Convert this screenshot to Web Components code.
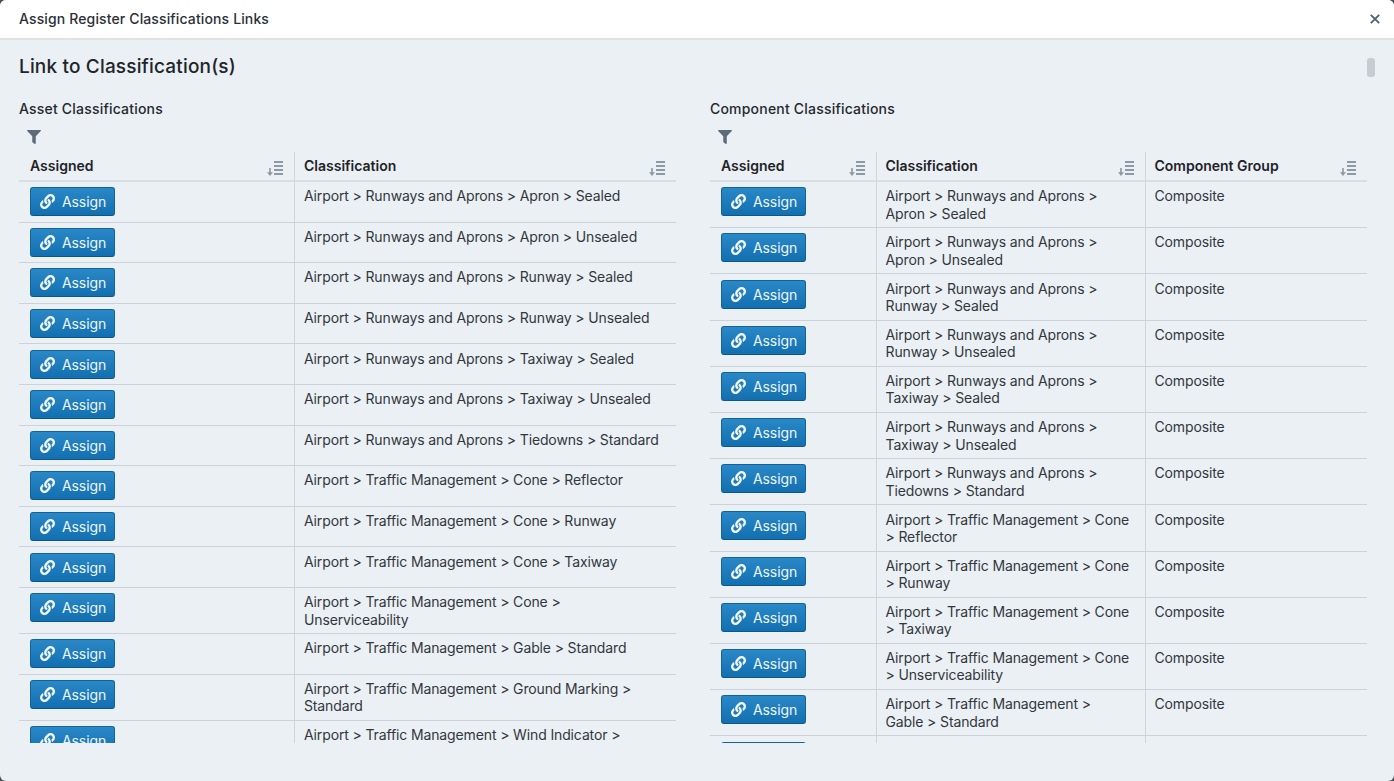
<!DOCTYPE html>
<html>
<head>
<meta charset="utf-8">
<title>Assign Register Classifications Links</title>
<style>
  html, body { margin: 0; height: 100%; background: #4a4f55; overflow: hidden; }
  body { font-family: Inter, "Noto Sans", "Liberation Sans", sans-serif; color: #212529; }
</style>
</head>
<body>
<assign-modal heading="Assign Register Classifications Links">
  <link-panel heading="Link to Classification(s)">
    <class-table heading="Asset Classifications" id="asset"></class-table>
    <class-table heading="Component Classifications" id="component"></class-table>
  </link-panel>
</assign-modal>

<script>
const LINK_PATH = 'M326.612 185.391c59.747 59.809 58.927 155.698.36 214.59-.11.12-.24.25-.36.37l-67.2 67.2c-59.27 59.27-155.699 59.262-214.96 0-59.27-59.26-59.27-155.7 0-214.96l37.106-37.106c9.84-9.84 26.786-3.3 27.294 10.606.648 17.722 3.826 35.527 9.69 52.721 1.986 5.822.567 12.262-3.783 16.612l-13.087 13.087c-28.026 28.026-28.905 73.66-1.155 101.96 28.024 28.579 74.086 28.749 102.325.51l67.2-67.19c28.191-28.191 28.073-73.757 0-101.83-3.701-3.694-7.429-6.564-10.341-8.569a16.037 16.037 0 0 1-6.947-12.606c-.396-10.567 3.348-21.456 11.698-29.806l21.054-21.055c5.521-5.521 14.182-6.199 20.584-1.731a152.482 152.482 0 0 1 20.522 17.197zM467.547 44.449c-59.261-59.262-155.69-59.27-214.96 0l-67.2 67.2c-.12.12-.25.25-.36.37-58.566 58.892-59.387 154.781.36 214.59a152.454 152.454 0 0 0 20.521 17.196c6.402 4.468 15.064 3.789 20.584-1.731l21.054-21.055c8.35-8.35 12.094-19.239 11.698-29.806a16.037 16.037 0 0 0-6.947-12.606c-2.912-2.005-6.64-4.875-10.341-8.569-28.073-28.073-28.191-73.639 0-101.83l67.2-67.19c28.239-28.239 74.3-28.069 102.325.51 27.75 28.3 26.872 73.934-1.155 101.96l-13.087 13.087c-4.35 4.35-5.769 10.79-3.783 16.612 5.864 17.194 9.042 34.999 9.69 52.721.509 13.906 17.454 20.446 27.294 10.606l37.106-37.106c59.271-59.259 59.271-155.699.001-214.959z';
const FILTER_PATH = 'M487.976 0H24.028C2.71 0-8.047 25.866 7.058 40.971L192 225.941V432c0 7.831 3.821 15.17 10.237 19.662l80 55.98C298.02 518.69 320 507.493 320 487.98V225.941l184.947-184.97C520.021 25.896 509.338 0 487.976 0z';

class AssignModal extends HTMLElement {
  constructor() {
    super();
    this.attachShadow({ mode: 'open' });
    this.shadowRoot.innerHTML = `
      <style>
        :host {
          display: flex;
          flex-direction: column;
          height: 100vh;
          background: #ebf0f5;
          border-radius: 6px;
          overflow: hidden;
        }
        header {
          flex: none;
          height: 38px;
          display: flex;
          align-items: center;
          justify-content: space-between;
          padding: 0 14px 2px 19px;
          box-sizing: content-box;
          height: 36px;
          background: #fff;
          border-bottom: 2px solid #dfe3e8;
          font-size: 14px;
          font-weight: 500;
          letter-spacing: .13px;
          color: #2b3036;
        }
        svg { display: block; margin-top: 2px; }
        main { flex: 1; min-height: 0; display: flex; }
      </style>
      <header>
        <span id="title"></span>
        <svg width="10" height="10" viewBox="0 0 10 10" fill="none" stroke="#4f6274" stroke-width="1.8">
          <path d="M.8.8l8.4 8.4M9.2.8L.8 9.2"/>
        </svg>
      </header>
      <main><slot></slot></main>
    `;
    this.shadowRoot.getElementById('title').textContent = this.getAttribute('heading');
  }
}

class LinkPanel extends HTMLElement {
  constructor() {
    super();
    this.attachShadow({ mode: 'open' });
    this.shadowRoot.innerHTML = `
      <style>
        :host {
          display: block;
          flex: 1;
          min-width: 0;
          position: relative;
          margin: 0 19px 38px 0;
          overflow: hidden;
        }
        h2 {
          margin: 0;
          padding: 12px 0 0 19px;
          height: 29px;
          line-height: 29px;
          font-size: 19px;
          font-weight: 500;
          letter-spacing: .17px;
          color: #212529;
        }
        .cols {
          display: grid;
          grid-template-columns: 657px 657px;
          column-gap: 34px;
          padding: 18px 0 0 19px;
        }
        .thumb {
          position: absolute;
          top: 18px;
          right: 0;
          width: 8px;
          height: 19px;
          border-radius: 3px;
          background: #c6ccd2;
        }
      </style>
      <h2 id="title"></h2>
      <div class="cols"><slot></slot></div>
      <div class="thumb"></div>
    `;
    this.shadowRoot.getElementById('title').textContent = this.getAttribute('heading');
  }
}

class AssignButton extends HTMLElement {
  constructor() {
    super();
    this.attachShadow({ mode: 'open' });
    this.shadowRoot.innerHTML = `
      <style>
        :host { display: block; width: 85px; white-space: normal; }
        button {
          display: flex;
          align-items: center;
          gap: 7px;
          width: 85px;
          height: 29px;
          padding: 0 0 0 9px;
          box-sizing: border-box;
          border: 1px solid #11639c;
          border-bottom-color: #0d5688;
          border-radius: 3px;
          background: linear-gradient(#2a88c7, #1270b1);
          color: #eef6fb;
          font: 400 14px Inter, "Noto Sans", sans-serif;
          letter-spacing: -.1px;
        }
        svg { flex: none; }
      </style>
      <button>
        <svg width="15" height="15" viewBox="0 0 512 512" fill="#f4f9fc"><path d="${LINK_PATH}"/></svg>
        <slot></slot>
      </button>
    `;
  }
}

class SortIcon extends HTMLElement {
  constructor() {
    super();
    this.attachShadow({ mode: 'open' });
    this.shadowRoot.innerHTML = `
      <style>
        :host { display: block; width: 16px; height: 16px; white-space: normal; }
        svg { display: block; }
      </style>
      <svg width="16" height="16" viewBox="0 0 16 16" fill="#8d99a6">
        <rect x="7" y="1" width="9" height="2"/>
        <rect x="7" y="5" width="9" height="2"/>
        <rect x="7" y="9" width="9" height="2"/>
        <rect x="7" y="13" width="9" height="2"/>
        <path d="M2.2 8h1.6v4.2H6L3 16 0 12.2h2.2z"/>
      </svg>
    `;
  }
}

class ClassTable extends HTMLElement {
  set config({ widths, headers, rows }) {
    const head = headers.map(h => `<div class="th"><span>${h}</span><sort-icon></sort-icon></div>`).join('');
    const body = rows.map(r => {
      const cells = r.map(c => `<div class="td">${c}</div>`).join('');
      return `<div class="td btn"><assign-button>Assign</assign-button></div>${cells}`;
    }).join('');
    this.shadowRoot.getElementById('grid').style.gridTemplateColumns = widths;
    this.shadowRoot.getElementById('grid').innerHTML = head + body;
  }
  constructor() {
    super();
    this.attachShadow({ mode: 'open' });
    this.shadowRoot.innerHTML = `
      <style>
        :host { display: block; min-width: 0; }
        h3 {
          margin: 0;
          height: 20px;
          line-height: 20px;
          font-size: 14px;
          font-weight: 500;
          letter-spacing: .2px;
          color: #24292e;
        }
        .filter { height: 14px; padding: 11px 0 8px 8px; }
        .filter svg { display: block; }
        #grid { display: grid; }
        .th, .td {
          box-sizing: border-box;
          padding: 5.3px 10px 5.3px 9px;
          border-left: 1px solid #cfd5db;
          font-size: 14px;
          line-height: 17.3px;
          letter-spacing: -.13px;
          white-space: pre-line;
          color: #32373c;
        }
        .th {
          height: 30px;
          display: flex;
          align-items: center;
          justify-content: space-between;
          padding: 0 11px 0 9px;
          border-bottom: 2px solid #d9dee3;
          font-weight: 600;
          letter-spacing: 0;
          color: #1f2327;
        }
        .th:first-child, .td.btn { border-left: 0; }
        .th:first-child { padding-left: 11px; }
        .th sort-icon { margin-top: 3px; }
        .td { border-bottom: 1px solid #cbd2d9; }
        .td.btn { padding-left: 11px; }
      </style>
      <h3 id="title"></h3>
      <div class="filter">
        <svg width="14" height="14" viewBox="0 0 512 512" fill="#5c6b7a"><path d="${FILTER_PATH}"/></svg>
      </div>
      <div id="grid"></div>
    `;
    this.shadowRoot.getElementById('title').textContent = this.getAttribute('heading');
  }
}

customElements.define('assign-modal', AssignModal);
customElements.define('link-panel', LinkPanel);
customElements.define('assign-button', AssignButton);
customElements.define('sort-icon', SortIcon);
customElements.define('class-table', ClassTable);

const asset = [
  'Airport &gt; Runways and Aprons &gt; Apron &gt; Sealed',
  'Airport &gt; Runways and Aprons &gt; Apron &gt; Unsealed',
  'Airport &gt; Runways and Aprons &gt; Runway &gt; Sealed',
  'Airport &gt; Runways and Aprons &gt; Runway &gt; Unsealed',
  'Airport &gt; Runways and Aprons &gt; Taxiway &gt; Sealed',
  'Airport &gt; Runways and Aprons &gt; Taxiway &gt; Unsealed',
  'Airport &gt; Runways and Aprons &gt; Tiedowns &gt; Standard',
  'Airport &gt; Traffic Management &gt; Cone &gt; Reflector',
  'Airport &gt; Traffic Management &gt; Cone &gt; Runway',
  'Airport &gt; Traffic Management &gt; Cone &gt; Taxiway',
  'Airport &gt; Traffic Management &gt; Cone &gt;\nUnserviceability',
  'Airport &gt; Traffic Management &gt; Gable &gt; Standard',
  'Airport &gt; Traffic Management &gt; Ground Marking &gt;\nStandard',
  'Airport &gt; Traffic Management &gt; Wind Indicator &gt;\nStandard'
];
const component = [
  'Airport &gt; Runways and Aprons &gt;\nApron &gt; Sealed',
  'Airport &gt; Runways and Aprons &gt;\nApron &gt; Unsealed',
  'Airport &gt; Runways and Aprons &gt;\nRunway &gt; Sealed',
  'Airport &gt; Runways and Aprons &gt;\nRunway &gt; Unsealed',
  'Airport &gt; Runways and Aprons &gt;\nTaxiway &gt; Sealed',
  'Airport &gt; Runways and Aprons &gt;\nTaxiway &gt; Unsealed',
  'Airport &gt; Runways and Aprons &gt;\nTiedowns &gt; Standard',
  'Airport &gt; Traffic Management &gt; Cone\n&gt; Reflector',
  'Airport &gt; Traffic Management &gt; Cone\n&gt; Runway',
  'Airport &gt; Traffic Management &gt; Cone\n&gt; Taxiway',
  'Airport &gt; Traffic Management &gt; Cone\n&gt; Unserviceability',
  'Airport &gt; Traffic Management &gt;\nGable &gt; Standard',
  'Airport &gt; Traffic Management &gt;\nGround Marking &gt; Standard'
];

document.getElementById('asset').config = {
  widths: '275px 382px',
  headers: ['Assigned', 'Classification'],
  rows: asset.map(a => [a])
};
document.getElementById('component').config = {
  widths: '165.5px 269px 222.5px',
  headers: ['Assigned', 'Classification', 'Component Group'],
  rows: component.map(c => [c, 'Composite'])
};
</script>
</body>
</html>
